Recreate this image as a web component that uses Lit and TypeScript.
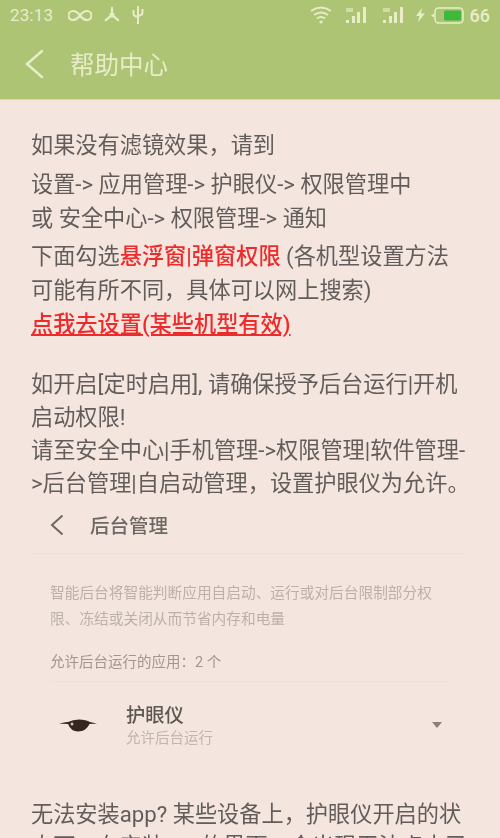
import { LitElement, html, css } from "lit";
import { customElement } from "lit/decorators.js";

@customElement("app-root")
export class AppRoot extends LitElement {
  static styles = css`
    :host {
      display: block;
      width: 500px;
      height: 838px;
      overflow: hidden;
      background: #f4e5df;
      font-family: Roboto, "Noto Sans CJK SC", "Noto Sans", sans-serif;
      color: #625d5a;
    }
    .blur { filter: blur(0.5px); height: 838px; overflow: hidden; }
    .top { background: #adc475; height: 99px; border-bottom: 1px solid #d5dcae; display: flex; flex-direction: column; color: #e8edc8; }
    .status { height: 30px; display: flex; align-items: center; padding: 0 10px; font-family: Roboto, sans-serif; font-size: 17px; }
    .time { width: 47px; letter-spacing: 0.2px; }
    .status svg { display: block; }
    .left { display: flex; align-items: center; gap: 11px; flex: 1; }
    .right { display: flex; align-items: center; }
    .sig1 { margin-left: 13px; }
    .sig2 { margin-left: 15px; }
    .bolt { margin-left: 12px; }
    .batt { margin-left: 6px; }
    .pct { font-size: 18px; font-weight: 500; margin-left: 6px; }
    .title { flex: 1; display: flex; align-items: center; padding: 0 0 2px 24px; gap: 27px; font-size: 24.5px; }
    .content { padding: 28px 30px 0 31px; font-size: 22.2px; }
    .l { line-height: 34.5px; white-space: nowrap; }
    .l.a { margin-top: 4px; }
    .l.b { margin-top: 3px; }
    .red { color: #ee2b2b; font-weight: 500; }
    .link { color: #ee2b2b; font-weight: 500; text-decoration: underline; line-height: 32px; }
    .gap { height: 28px; }
    .l.tight { line-height: 33.3px; }
    .shot { margin: 2px 2px 0 -1px; }
    .shead { display: flex; align-items: center; gap: 24px; padding: 0 0 6px 20px; height: 44px; font-size: 19.5px; font-weight: 500; color: #6e6864; border-bottom: 1px solid #efe2da; }
    .shead svg { margin-right: 2px; }
    .desc { padding: 26px 20px 0; font-size: 14.7px; line-height: 26.7px; color: #bcb0aa; white-space: nowrap; }
    .count { padding: 20px 0 8px; font-size: 14.5px; line-height: 20px; color: #a39690; border-bottom: 1px solid #efe2da; margin: 0 16px 0 20px; }
    .app { display: flex; align-items: center; height: 86px; padding: 0 26px 0 29px; }
    .eye { width: 38px; height: 13px; margin-right: 29px; }
    .info { flex: 1; }
    .name { font-size: 19.3px; line-height: 27px; font-weight: 500; color: #5d5753; }
    .sub { font-size: 14.5px; line-height: 20px; color: #c0b5af; }
    .caret { width: 0; height: 0; border-left: 5px solid transparent; border-right: 5px solid transparent; border-top: 6px solid #8a807b; }
    .after { margin-top: 30px; }
    .after .l { line-height: 32px; }
  `;

  render() {
    return html`
      <div class="blur">
        <div class="top">
          <div class="status">
            <div class="left">
              <span class="time">23:13</span>
              <svg width="24" height="13" viewBox="0 0 24 12" fill="none" stroke="#e8edc8" stroke-width="2.200"><path d="M12 6C9 2 7 1.5 5 1.5a4.5 4.5 0 0 0 0 9c2 0 4-.5 7-4.500C15 2 17 1.500 19 1.500a4.500 4.500 0 0 1 0 9c-2 0-4-.5-7-4.500z"/></svg>
              <svg width="18" height="18" viewBox="0 0 19 19" fill="none" stroke="#e8edc8" stroke-width="2.400" stroke-linecap="round"><path d="M9.500 2v7.500M9.500 9.500L3 15M9.500 9.500L16 15"/><circle cx="9.500" cy="9.500" r="1.500" fill="#e8edc8"/></svg>
              <svg width="12" height="20" viewBox="0 0 12 20" fill="none" stroke="#e8edc8" stroke-width="2"><path d="M6 1v18M1.500 5v4q0 2 4.500 3M10.500 4v4q0 2-4.500 3"/></svg>
            </div>
            <div class="right">
              <svg width="22" height="20" viewBox="0 0 22 20" fill="none" stroke="#e8edc8" stroke-width="2"><path d="M1 6q10-7 20 0M4 10q7-5 14 0M7 13.500q4-3 8 0"/><circle cx="11" cy="17" r="1.600" fill="#e8edc8" stroke="none"/></svg>
              <svg class="sig1" width="22" height="18" viewBox="0 0 22 18" fill="#e8edc8"><rect x="1" y="14" width="3" height="3"/><rect x="7" y="10" width="3" height="7"/><rect x="12" y="6" width="3" height="11"/><rect x="18" y="1" width="3" height="16"/><rect x="1" y="2" width="7" height="4" opacity=".6"/></svg>
              <svg class="sig2" width="22" height="18" viewBox="0 0 22 18" fill="#e8edc8"><rect x="1" y="14" width="3" height="3"/><rect x="7" y="10" width="3" height="7"/><rect x="12" y="6" width="3" height="11"/><rect x="18" y="1" width="3" height="16"/><rect x="1" y="2" width="7" height="4" opacity=".6"/></svg>
              <svg class="bolt" width="9" height="14" viewBox="0 0 9 14" fill="#e8edc8"><path d="M6 0L0 8h3.500L2 14l7-8.500H5z"/></svg>
              <svg class="batt" width="33" height="17" viewBox="0 0 33 17"><path d="M0 8.500l3-2v4z" fill="#e8edc8"/><rect x="4" y="1" width="28" height="15" rx="3.500" fill="none" stroke="#e8edc8" stroke-width="1.500"/><rect x="13" y="3.500" width="17" height="10" rx="1.500" fill="#3fb93a"/></svg>
              <span class="pct">66</span>
            </div>
          </div>
          <div class="title">
            <svg width="19" height="30" viewBox="0 0 19 30" fill="none" stroke="#e8edc8" stroke-width="2.500" stroke-linecap="round"><path d="M18 2L3 15l15 13"/></svg>
            <span>帮助中心</span>
          </div>
        </div>
        <div class="content">
          <div class="l">如果没有滤镜效果，请到</div>
          <div class="l a">设置-> 应用管理-> 护眼仪-> 权限管理中</div>
          <div class="l">或 安全中心-> 权限管理-> 通知</div>
          <div class="l b">下面勾选<span class="red">悬浮窗|弹窗权限</span> (各机型设置方法</div>
          <div class="l">可能有所不同，具体可以网上搜索)</div>
          <div class="link">点我去设置(某些机型有效)</div>
          <div class="gap"></div>
          <div class="l tight">如开启[定时启用], 请确保授予后台运行|开机</div>
          <div class="l tight">启动权限!</div>
          <div class="l tight">请至安全中心|手机管理->权限管理|软件管理-</div>
          <div class="l tight">>后台管理|自启动管理，设置护眼仪为允许。</div>
          <div class="shot">
            <div class="shead">
              <svg width="14" height="22" viewBox="0 0 14 22" fill="none" stroke="#6e6864" stroke-width="2"><path d="M12.500 1.500L2 11l10.500 9.500"/></svg>
              <span>后台管理</span>
            </div>
            <div class="desc">智能后台将智能判断应用自启动、运行或对后台限制部分权<br>限、冻结或关闭从而节省内存和电量</div>
            <div class="count">允许后台运行的应用：2 个</div>
            <div class="app">
              <svg class="eye" viewBox="0 0 38 13"><path d="M0 5Q5 3 9 3 14 .5 20 .5 27 .5 31 3 34 3.500 38 5 34 4.500 30.500 5 27 12.500 19 12.500 12 12.500 9 5 4 4.500 0 5z" fill="#35261f"/><circle cx="13" cy="5" r="1.500" fill="#cdc3bd"/></svg>
              <div class="info">
                <div class="name">护眼仪</div>
                <div class="sub">允许后台运行</div>
              </div>
              <div class="caret"></div>
            </div>
          </div>
          <div class="after">
            <div class="l">无法安装app? 某些设备上，护眼仪开启的状</div>
            <div class="l">态下，在安装app的界面，会出现无法点击已</div>
          </div>
        </div>
      </div>
    `;
  }
}
